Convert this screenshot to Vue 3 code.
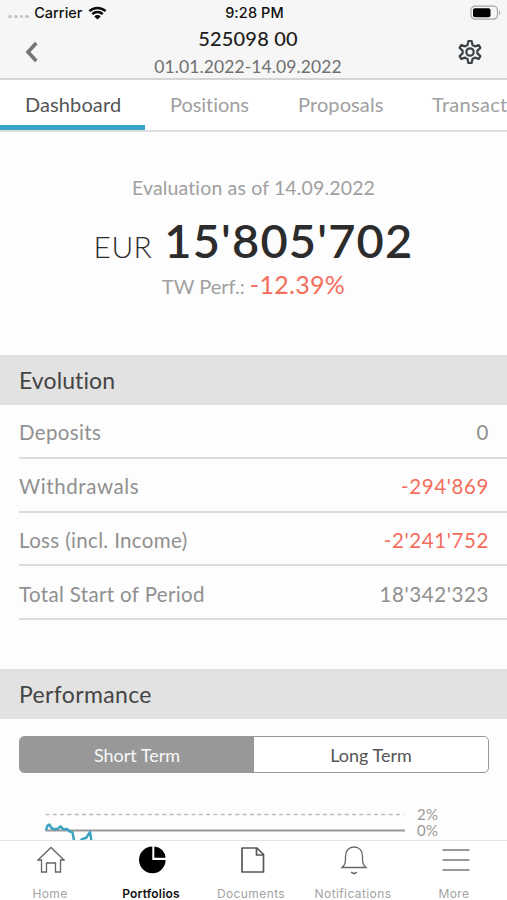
<template>
  <div class="app">
    <header class="header">
      <div class="status-bar">
        <div class="status-left">
          <span class="signal"><i v-for="n in 4" :key="n"></i></span>
          <span class="carrier">Carrier</span>
          <svg class="wifi" width="19" height="14" viewBox="0 0 19 14">
            <path d="M1.4 5.2a11.6 11.6 0 0 1 16.2 0M4.3 8.2a7.4 7.4 0 0 1 10.4 0" fill="none" stroke="#0c0c0c" stroke-width="2.5" />
            <path d="M6.3 10.4a4.5 4.5 0 0 1 6.4 0L9.5 13.6z" fill="#0c0c0c" />
          </svg>
        </div>
        <span class="time">9:28 PM</span>
        <svg class="battery" width="31" height="16" viewBox="0 0 31 16">
          <rect x="1" y="1.2" width="26.5" height="13" rx="4" fill="none" stroke="#a5a5a5" stroke-width="1.2" />
          <rect x="3" y="3.2" width="17.5" height="9" rx="2" fill="#000" />
          <path d="M29 5.4c1.7.7 1.7 3.9 0 4.6z" fill="#a5a5a5" />
        </svg>
      </div>
      <div class="nav-bar">
        <svg class="back" width="16" height="22" viewBox="0 0 16 22">
          <path d="M12.3 1.9 4 11l8.3 9.100" fill="none" stroke="#757575" stroke-width="3.7" />
        </svg>
        <div class="titles">
          <h1 class="account">525098 00</h1>
          <p class="period">01.01.2022-14.09.2022</p>
        </div>
        <svg class="gear" width="26" height="26" viewBox="0 0 26 26" fill="none" stroke="#3c4248" stroke-width="2.2" stroke-linejoin="round">
          <path d="M11.4 2h3.2l.9 4 2.400 1.400 3.900-1.300 1.600 2.800-3 2.700v2.800l3 2.700-1.600 2.800-3.900-1.300-2.400 1.400-.9 4h-3.200l-.9-4-2.400-1.400-3.900 1.300-1.600-2.800 3-2.700v-2.800l-3-2.700 1.600-2.800 3.900 1.300L10.500 6z" />
          <circle cx="13" cy="13" r="3.7" />
        </svg>
      </div>
    </header>

    <nav class="tabs">
      <button
        v-for="tab in tabs"
        :key="tab.id"
        type="button"
        :class="['tab', tab.id, { active: activeTab === tab.id }]"
        @click="activeTab = tab.id"
      >
        <span>{{ tab.label }}</span>
      </button>
    </nav>

    <main class="content">
      <section class="summary">
        <p class="evaluation">Evaluation as of 14.09.2022</p>
        <p class="total"><span class="currency">EUR</span><span class="amount">15'805'702</span></p>
        <p class="perf"><span class="perf-label">TW Perf.:</span><span class="perf-value">-12.39%</span></p>
      </section>

      <h2 class="section-title evolution">Evolution</h2>
      <ul class="rows">
        <li v-for="row in rows" :key="row.id" :class="['row', row.id]">
          <span class="row-label">{{ row.label }}</span>
          <span :class="['row-value', { negative: row.value.startsWith('-') }]">{{ row.value }}</span>
        </li>
      </ul>

      <h2 class="section-title performance">Performance</h2>
      <div class="segment">
        <button type="button" :class="{ selected: term === 'short' }" @click="term = 'short'">Short Term</button>
        <button type="button" :class="{ selected: term === 'long' }" @click="term = 'long'">Long Term</button>
      </div>
      <svg class="chart" width="507" height="40" viewBox="0 800 507 40">
        <path d="M45.5 814.5H404" stroke="#bdbdbd" stroke-width="1.3" stroke-dasharray="4 3.3" />
        <path d="M45.5 830.5H405" stroke="#999" stroke-width="1.8" />
        <path d="M46 830.5l1.500-5 2-1 2 3.700 3 1 3.500-.5 2.500-2.300 2.500 2.800 4-.3 2.500 2.500 3 1 1.500 8M80.500 840l3-1.500 2.500-.5 4-6 1.500 9" fill="none" stroke="#3ca4c1" stroke-width="2.5" stroke-linejoin="round" />
        <text x="417" y="819.5">2%</text>
        <text x="417" y="836">0%</text>
      </svg>
    </main>

    <footer class="tab-bar">
      <a class="item home">
        <svg width="28" height="28" viewBox="0 0 28 28" fill="none" stroke="#666" stroke-width="1.3">
          <path d="M1 14 14 1.500 27 14h-3.500v12h-5V17h-9v9h-5V14z" />
        </svg>
        <span>Home</span>
      </a>
      <a class="item portfolios current">
        <svg width="28" height="28" viewBox="0 0 28 28" fill="#000">
          <path d="M14.300.5V14H27.600A13.300 13.400 0 1 1 14.300.5z" />
          <path d="M16.300.5A12 12 0 0 1 27.600 11.800H16.300z" />
        </svg>
        <span>Portfolios</span>
      </a>
      <a class="item documents">
        <svg width="28" height="28" viewBox="0 0 28 28" fill="none" stroke="#585858" stroke-width="1.7" stroke-linejoin="round">
          <path d="M3 2h15l6.500 6.500V26H3zM17.500 2v7h7" />
        </svg>
        <span>Documents</span>
      </a>
      <a class="item notifications">
        <svg width="28" height="30" viewBox="0 0 28 30" fill="none" stroke="#666" stroke-width="1.3">
          <path d="M2 21.500c3.500-3 3.500-5 3.500-11C5.500 4.500 9 1 14 1s8.500 3.500 8.500 9.500c0 6 0 8 3.500 11z" />
          <path d="M11.300 26q2.700 3 5.400 0" stroke-width="1.8" />
        </svg>
        <span>Notifications</span>
      </a>
      <a class="item more">
        <svg width="28" height="28" viewBox="0 0 28 28" fill="none" stroke="#777" stroke-width="1.6">
          <path d="M.5 4h27M.5 14h27M.5 24h27" />
        </svg>
        <span>More</span>
      </a>
    </footer>
  </div>
</template>

<script setup>
import { ref } from 'vue'

const activeTab = ref('dashboard')
const term = ref('short')

const tabs = [
  { id: 'dashboard', label: 'Dashboard' },
  { id: 'positions', label: 'Positions' },
  { id: 'proposals', label: 'Proposals' },
  { id: 'transact', label: 'Transact' }
]

const rows = [
  { id: 'deposits', label: 'Deposits', value: '0' },
  { id: 'withdrawals', label: 'Withdrawals', value: "-294'869" },
  { id: 'loss', label: 'Loss (incl. Income)', value: "-2'241'752" },
  { id: 'start', label: 'Total Start of Period', value: "18'342'323" }
]
</script>

<style>
body {
  margin: 0;
  overflow: hidden;
}
</style>

<style scoped>
.app {
  width: 507px;
  height: 900px;
  display: flex;
  flex-direction: column;
  overflow: hidden;
  background: #fdfdfd;
  font-family: Lato, 'Open Sans', sans-serif;
  font-variant-ligatures: none;
}

h1,
h2,
p,
ul {
  margin: 0;
  padding: 0;
  font-weight: 400;
}

button {
  border: 0;
  padding: 0;
  background: none;
  font-family: inherit;
}

.header {
  height: 78px;
  flex: none;
  background: #f6f6f6;
  border-bottom: 2px solid #d4d4d4;
}

.status-bar {
  height: 25px;
  display: grid;
  grid-template-columns: 1fr auto 1fr;
  align-items: center;
  padding: 0 6px 0 8px;
  font-family: Inter, sans-serif;
  font-size: 14.5px;
  font-weight: 500;
  color: #111;
}

.status-left {
  display: flex;
  align-items: center;
}

.signal {
  display: flex;
  gap: 2px;
  margin: 8px 5px 0 0;
}

.signal i {
  width: 3.8px;
  height: 3.8px;
  border-radius: 50%;
  background: #c4c4c4;
}

.wifi {
  margin-left: 6px;
}

.time {
  letter-spacing: 0.1px;
}

.battery {
  justify-self: end;
}

.nav-bar {
  height: 53px;
  display: grid;
  grid-template-columns: 44px 1fr 44px;
  align-items: center;
}

.back {
  margin: -2px 0 0 24px;
}

.gear {
  margin: -2px 0 0 -6px;
}

.titles {
  text-align: center;
  margin-right: 11px;
}

.account {
  font-size: 20px;
  line-height: 26px;
  font-weight: 500;
  letter-spacing: 0.2px;
  color: #1c1c1c;
}

.period {
  font-size: 17.5px;
  line-height: 29px;
  padding-top: 1px;
  margin-bottom: -1px;
  letter-spacing: 0.1px;
  color: #707070;
}

.tabs {
  height: 50px;
  flex: none;
  display: flex;
  overflow: hidden;
  background: #fff;
  border-bottom: 2px solid #dedede;
}

.tab {
  flex: none;
  height: 50px;
  box-sizing: border-box;
  padding: 0 0 2px 25px;
  font-size: 20px;
  letter-spacing: 0.1px;
  text-align: left;
  white-space: nowrap;
  color: #a0a0a0;
}

.tab.dashboard {
  width: 145px;
}

.tab.positions {
  width: 128px;
  letter-spacing: -0.05px;
}

.tab.proposals {
  width: 134px;
}

.tab.transact {
  letter-spacing: 0.3px;
}

.tab.active {
  color: #555;
  box-shadow: inset 0 -5px #36a5c8;
}

.content {
  flex: 1;
  min-height: 0;
  overflow: hidden;
}

.summary {
  height: 223px;
  box-sizing: border-box;
  padding-top: 43px;
  text-align: center;
  color: #a0a0a0;
}

.evaluation {
  font-size: 19.5px;
  line-height: 26px;
  letter-spacing: 0.15px;
}

.total {
  height: 60px;
  line-height: 60px;
  margin-top: 9px;
  color: #2c2c2c;
  white-space: nowrap;
}

.currency {
  font-size: 30px;
  font-weight: 300;
  letter-spacing: 0.4px;
  margin-right: 12px;
}

.amount {
  font-size: 47px;
  font-weight: 600;
  letter-spacing: 1.15px;
}

.perf {
  height: 30px;
  line-height: 30px;
  margin-top: -1px;
}

.perf-label {
  font-size: 20px;
  margin-right: 5px;
}

.perf-value {
  font-size: 25px;
  letter-spacing: 0.3px;
  color: #f46e5d;
}

.section-title {
  height: 50px;
  line-height: 50px;
  padding-left: 19px;
  background: #e2e2e2;
  font-size: 23px;
  color: #444;
}

.section-title.evolution {
  letter-spacing: 0.1px;
}

.section-title.performance {
  letter-spacing: 0.35px;
}

.rows {
  list-style: none;
  padding-left: 19px;
  margin-bottom: 49px;
}

.row {
  height: 53.75px;
  box-sizing: border-box;
  display: flex;
  justify-content: space-between;
  align-items: center;
  padding: 3px 18px 0 0;
  border-bottom: 2px solid #dcdcdc;
  font-size: 20.5px;
  letter-spacing: 0.35px;
  color: #909090;
}

.row.withdrawals .row-label {
  letter-spacing: 0.6px;
}

.row-value {
  letter-spacing: 0.6px;
}

.row-value.negative {
  color: #f46e5d;
}

.segment {
  height: 37px;
  margin: 17px 18px 0 19px;
  box-sizing: border-box;
  display: flex;
  border: 1px solid #999;
  border-radius: 5px;
  overflow: hidden;
  background: #fff;
}

.segment button {
  flex: 1;
  font-size: 18px;
  color: #555;
}

.segment button.selected {
  background: #989898;
  color: #f8f8f8;
}

.chart {
  display: block;
  margin-top: 27px;
}

.chart text {
  font-size: 15px;
  letter-spacing: 0.3px;
  fill: #999;
}

.tab-bar {
  height: 60px;
  flex: none;
  box-sizing: border-box;
  display: grid;
  grid-template-columns: repeat(5, 101px);
  border-top: 1px solid #e4e4e4;
  background: #fff;
}

.item {
  display: flex;
  flex-direction: column;
  align-items: center;
  height: 59px;
  box-sizing: border-box;
  justify-content: space-between;
  padding: 5px 1px 0 0;
  font-family: Inter, sans-serif;
  font-size: 12px;
  letter-spacing: 0.4px;
  color: #a3a3a3;
}

.item svg {
  margin-left: 2px;
}

.item.documents svg {
  margin-left: 1px;
}

.item.more svg {
  margin-left: 3px;
}

.item span {
  line-height: 12px;
}

.item.documents span {
  margin-right: 2px;
}

.item.current {
  color: #111;
  font-weight: 600;
  letter-spacing: 0.2px;
}
</style>
